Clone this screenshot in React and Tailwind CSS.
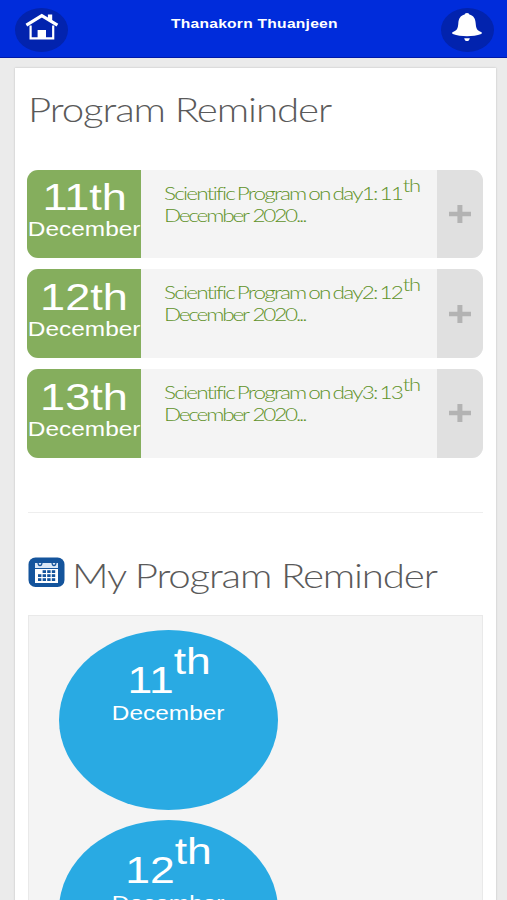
const programs = [
  { id: 1, day: "11", title: "Scientific Program on day1: 11" },
  { id: 2, day: "12", title: "Scientific Program on day2: 12" },
  { id: 3, day: "13", title: "Scientific Program on day3: 13" },
];

const myDays = ["11", "12"];

function HomeIcon() {
  return (
    <svg width="34" height="28" viewBox="0 0 34 28" fill="none">
      <path
        d="M5.6 12.5V25.4H28.2V12.5"
        stroke="#fff"
        strokeWidth="2.2"
      />
      <path d="M22.9 1.4H27.2V9.5L22.9 6.5Z" fill="#fff" />
      <path d="M1.4 12.2L16.8 2.6L32.4 12.2" stroke="#fff" strokeWidth="3.2" />
      <path d="M12.6 17H21V26H12.6Z" fill="#fff" />
    </svg>
  );
}

function BellIcon() {
  return (
    <svg width="30" height="28" viewBox="0 0 30 28" fill="#fff">
      <path d="M15 0C16.6 0 17.3 .8 17.3 1.6C21.8 2.6 23.4 6 23.7 10.5C24 15 24.8 17.5 29.6 19.2C30 20 29.8 20.6 29.2 21C21 23.9 9 23.9 .8 21C.2 20.6 0 20 .4 19.2C5.2 17.5 6 15 6.3 10.5C6.6 6 8.2 2.6 12.7 1.6C12.7 .8 13.4 0 15 0Z" />
      <path d="M12.2 25.2H17.8C17.4 27.2 16.4 28 15 28C13.6 28 12.6 27.2 12.2 25.2Z" />
    </svg>
  );
}

function CalendarIcon() {
  return (
    <svg width="37" height="31" viewBox="0 0 37 31" className="shrink-0">
      <rect x="0.5" y="0.5" width="36" height="29.5" rx="7" fill="#14549c" />
      <path d="M7 6H30V11H7Z" fill="#dbe8f6" />
      <path d="M7 12H30V26H7Z" fill="#fff" />
      <path
        d="M10 5.2Q10 8.6 12 8.6Q14 8.6 14 5.2M24 5.2Q24 8.6 26 8.6Q28 8.6 28 5.2"
        fill="none"
        stroke="#14549c"
        strokeWidth="1.2"
      />
      {[14.5, 18.5, 22.5].map((y, row) =>
        [10, 14.6, 19.2, 23.8].map((x, col) =>
          row === 0 && col === 0 ? null : (
            <rect key={`${x}-${y}`} x={x} y={y - 1.3} width="3.4" height="2.8" fill="#14549c" />
          )
        )
      )}
    </svg>
  );
}

function ProgramRow({ day, title }) {
  return (
    <div className="flex h-[88.6px] overflow-hidden rounded-[11px] bg-[#f4f4f4]">
      {/* Date block */}
      <div className="flex w-[114px] shrink-0 flex-col items-center bg-[#85ae5d] pt-[7.5px] text-white">
        <span className="ml-px scale-x-[1.22] text-[37px] leading-[42px]">{day}th</span>
        <span className="scale-x-[1.22] text-[20px] leading-[20px]">December</span>
      </div>

      {/* Title */}
      <div className="flex-1 pt-[12px] pl-[23px]">
        <p className="w-[200px] origin-left scale-x-[1.22] font-['Lato',sans-serif] text-[18.5px] leading-[22px] font-light tracking-[-1.45px] whitespace-nowrap text-[#5f9229] [word-spacing:-1.3px]">
          {title}
          <sup className="top-[-8px] ml-[0.5px] text-[18px] leading-none tracking-[-0.9px]">th</sup>
          <br />
          <span className="tracking-[-1.8px] [word-spacing:1px]">December 2020...</span>
        </p>
      </div>

      {/* Expand button */}
      <button className="flex w-[46.5px] shrink-0 items-center justify-center bg-[#e0e0e0]">
        <svg width="22" height="18" viewBox="0 0 22 18" fill="#b3b3b3">
          <path d="M8.4 0H13.4V6.7H22V11.3H13.4V18H8.4V11.3H0V6.7H8.4Z" />
        </svg>
      </button>
    </div>
  );
}

function DayCircle({ day }) {
  return (
    <div className="flex h-[180px] w-[219px] shrink-0 flex-col items-center rounded-[50%] bg-[#29aae3] text-white">
      <span className="mt-[28px] ml-px scale-x-[1.22] text-[36.5px] leading-[45px]">
        {day}
        <sup className="top-[-19px] text-[36.5px] leading-none">th</sup>
      </span>
      <span className="scale-x-[1.22] text-[20px] leading-[20px]">December</span>
    </div>
  );
}

export default function App() {
  return (
    <div className="h-[900px] w-[507px] overflow-hidden bg-[#ebebeb] font-['Liberation_Sans',Arial,sans-serif]">
      {/* Top bar */}
      <header className="flex h-[58px] items-start justify-between border-b border-[#0019a8] bg-[#002cdb] pr-[13px] pl-[15px]">
        <button className="mt-[8px] flex h-[44px] w-[53px] items-start justify-center rounded-[50%] bg-[#0223ae] pt-[5px]">
          <HomeIcon />
        </button>
        <h1 className="mt-[15px] scale-x-[1.22] text-[12.8px] leading-[17px] font-bold tracking-[0.2px] text-white">
          Thanakorn Thuanjeen
        </h1>
        <button className="mt-[8px] flex h-[44px] w-[53px] items-start justify-center rounded-[50%] bg-[#0223ae] pt-[5px]">
          <BellIcon />
        </button>
      </header>

      <main className="mt-[10px] mr-[11px] ml-[15px] h-[840px] bg-white pr-[12.7px] pl-[12px] shadow-[0_0_2px_rgba(0,0,0,0.2)]">
        <h2 className="flex h-[101.5px] pt-[20.5px] pl-px font-['Lato',sans-serif] text-[33px] leading-[40px] font-light tracking-[-0.9px] whitespace-nowrap text-[#5a5a5a]">
          <span className="origin-left scale-x-[1.22]">Program Reminder</span>
        </h2>

        <div className="flex flex-col gap-[11.2px]">
          {programs.map((p) => (
            <ProgramRow key={p.id} day={p.day} title={p.title} />
          ))}
        </div>

        <hr className="mt-[54.5px] ml-px border-[#eeeeee]" />

        {/* My Program Reminder */}
        <div className="mt-[43.5px] ml-px flex h-[58.5px] items-start">
          <CalendarIcon />
          <h2 className="-mt-[2px] ml-[7px] origin-left scale-x-[1.22] font-['Lato',sans-serif] text-[33px] leading-[40px] font-light tracking-[-0.95px] whitespace-nowrap text-[#5a5a5a]">
            My Program Reminder
          </h2>
        </div>

        <div className="ml-px flex h-[400px] flex-col gap-[10px] border border-[#e9e9e9] bg-[#f4f4f4] pt-[14px] pl-[30px]">
          {myDays.map((day) => (
            <DayCircle key={day} day={day} />
          ))}
        </div>
      </main>
    </div>
  );
}
